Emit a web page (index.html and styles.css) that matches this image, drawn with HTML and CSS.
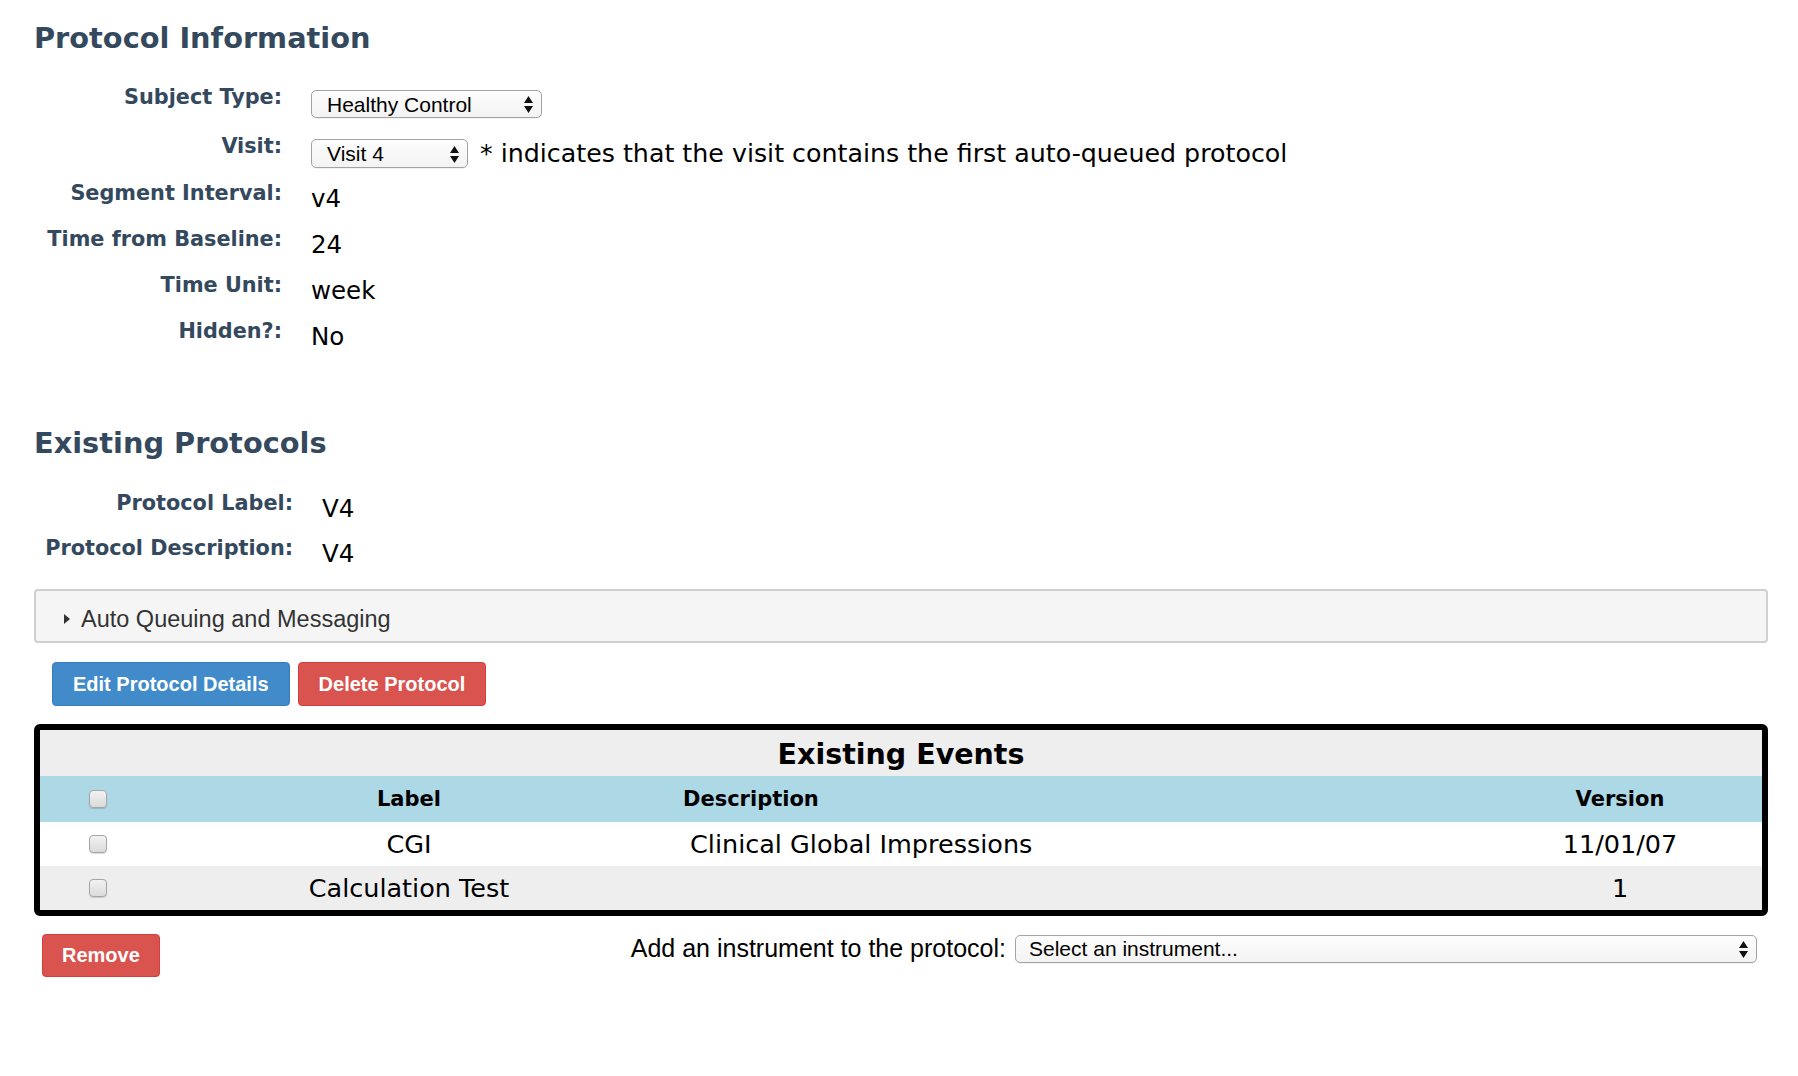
FILE: index.html
```html
<!DOCTYPE html>
<html lang="en">
<head>
    <meta charset="UTF-8">
    <meta name="viewport" content="width=device-width, initial-scale=1.0">
    <title>Protocol Information</title>
    <link rel="stylesheet" href="styles.css">
</head>
<body>
    <h1 class="section-title">Protocol Information</h1>

    <div class="info-grid">
        <div class="info-label">Subject Type:</div>
        <div class="info-control">
            <span class="select-wrap">
                <select class="select select-subject">
                    <option>Healthy Control</option>
                </select>
                <svg class="select-arrows" width="9" height="17" viewBox="0 0 9 17"><path d="M0 7 L4.5 0 L9 7 Z M0 10 L9 10 L4.5 17 Z"/></svg>
            </span>
        </div>

        <div class="info-label">Visit:</div>
        <div class="info-control">
            <span class="select-wrap">
                <select class="select select-visit">
                    <option>Visit 4</option>
                </select>
                <svg class="select-arrows" width="9" height="17" viewBox="0 0 9 17"><path d="M0 7 L4.5 0 L9 7 Z M0 10 L9 10 L4.5 17 Z"/></svg>
            </span>
            <span class="visit-note">* indicates that the visit contains the first auto-queued protocol</span>
        </div>

        <div class="info-label">Segment Interval:</div>
        <div class="info-value">v4</div>

        <div class="info-label">Time from Baseline:</div>
        <div class="info-value">24</div>

        <div class="info-label">Time Unit:</div>
        <div class="info-value">week</div>

        <div class="info-label">Hidden?:</div>
        <div class="info-value">No</div>
    </div>

    <h2 class="section-title protocols-title">Existing Protocols</h2>

    <div class="info-grid protocol-grid">
        <div class="info-label">Protocol Label:</div>
        <div class="info-value">V4</div>

        <div class="info-label">Protocol Description:</div>
        <div class="info-value">V4</div>
    </div>

    <div class="queue-panel">
        <span class="caret"></span>Auto Queuing and Messaging
    </div>

    <div class="protocol-buttons">
        <button type="button" class="btn btn-primary">Edit Protocol Details</button>
        <button type="button" class="btn btn-danger">Delete Protocol</button>
    </div>

    <div class="events-box">
        <table class="events-table">
            <caption>Existing Events</caption>
            <colgroup>
                <col class="col-check">
                <col class="col-label">
                <col class="col-desc">
                <col class="col-version">
            </colgroup>
            <thead>
                <tr>
                    <th class="cell-check"><input type="checkbox" class="check"></th>
                    <th>Label</th>
                    <th class="cell-desc">Description</th>
                    <th>Version</th>
                </tr>
            </thead>
            <tbody>
                <tr>
                    <td class="cell-check"><input type="checkbox" class="check"></td>
                    <td>CGI</td>
                    <td class="cell-desc">Clinical Global Impressions</td>
                    <td>11/01/07</td>
                </tr>
                <tr>
                    <td class="cell-check"><input type="checkbox" class="check"></td>
                    <td>Calculation Test</td>
                    <td class="cell-desc"></td>
                    <td>1</td>
                </tr>
            </tbody>
        </table>
    </div>

    <div class="table-actions">
        <button type="button" class="btn btn-danger btn-remove">Remove</button>
        <div class="add-instrument">
            <label for="instrument">Add an instrument to the protocol:</label>
            <span class="select-wrap">
                <select id="instrument" class="select select-instrument">
                    <option>Select an instrument...</option>
                </select>
                <svg class="select-arrows" width="9" height="17" viewBox="0 0 9 17"><path d="M0 7 L4.5 0 L9 7 Z M0 10 L9 10 L4.5 17 Z"/></svg>
            </span>
        </div>
    </div>
</body>
</html>
```

FILE: styles.css
```css
body {
    margin: 0;
    padding: 21px 30px 40px 34px;
    background-color: #fff;
    font-family: "DejaVu Sans", Verdana, sans-serif;
    color: #000;
}

.section-title {
    margin: 0;
    font-size: 28.8px;
    line-height: 34px;
    font-weight: bold;
    color: #34495e;
}

.protocols-title {
    margin-top: 62px;
}

/* label / value rows */
.info-grid {
    display: grid;
    grid-template-columns: 248px auto;
    grid-template-rows: 49px 47px repeat(4, 46px);
    column-gap: 29px;
    margin-top: 29px;
}

.protocol-grid {
    grid-template-columns: 259px auto;
    grid-template-rows: 45px 46px;
    margin-top: 30px;
}

.info-label {
    text-align: right;
    font-size: 20.8px;
    line-height: 26px;
    font-weight: bold;
    color: #34495e;
}

.info-value {
    padding-top: 4px;
    font-size: 24.5px;
    line-height: 30px;
}

.info-control {
    display: flex;
    align-items: center;
    align-self: start;
    padding-top: 6px;
}

.visit-note {
    margin-left: 12px;
    font-size: 25.3px;
    white-space: nowrap;
}

/* mac style selects */
.select-wrap {
    position: relative;
    display: inline-block;
}

.select {
    appearance: none;
    -webkit-appearance: none;
    display: block;
    height: 28px;
    padding: 0 26px 0 15px;
    border: 1px solid #a3a3a3;
    border-radius: 5px;
    background: linear-gradient(#fdfdfd, #f3f3f3);
    box-shadow: 0 1px 1px rgba(0, 0, 0, 0.06);
    font-family: "Liberation Sans", Arial, sans-serif;
    font-size: 21px;
    color: #000;
}

.select-subject {
    width: 231px;
}

.select-visit {
    width: 157px;
    height: 29px;
}

.select-instrument {
    width: 742px;
    padding-left: 13px;
}

.select-arrows {
    position: absolute;
    right: 9px;
    top: 50%;
    margin-top: -8px;
    fill: #111;
    pointer-events: none;
}

/* collapsible panel */
.queue-panel {
    box-sizing: border-box;
    height: 54px;
    margin-top: 8px;
    padding: 6px 0 0 28px;
    border: 2px solid #cfcfcf;
    border-radius: 4px;
    background-color: #f5f5f5;
    font-family: "Liberation Sans", Arial, sans-serif;
    font-size: 23.5px;
    line-height: 44px;
    color: #333;
}

.caret {
    display: inline-block;
    width: 0;
    height: 0;
    margin-right: 11px;
    vertical-align: 3px;
    border-left: 6px solid #333;
    border-top: 5.5px solid transparent;
    border-bottom: 5.5px solid transparent;
}

/* buttons */
.protocol-buttons {
    display: flex;
    gap: 8px;
    margin: 19px 0 0 18px;
}

.btn {
    height: 44px;
    padding: 0 20px;
    border: 1px solid;
    border-radius: 4px;
    font-family: "Liberation Sans", Arial, sans-serif;
    font-size: 20px;
    font-weight: bold;
    color: #fff;
    cursor: pointer;
}

.btn-primary {
    background-color: #428bca;
    border-color: #357ebd;
}

.btn-danger {
    background-color: #d9534f;
    border-color: #d43f3a;
}

.btn-remove {
    height: 43px;
    margin-left: 8px;
    padding: 0 19px;
}

/* events table */
.events-box {
    margin-top: 18px;
    border: 6px solid #000;
    border-radius: 6px;
    overflow: hidden;
}

.events-table {
    width: 100%;
    table-layout: fixed;
    border-collapse: collapse;
}

.events-table caption {
    padding-top: 3px;
    background-color: #eee;
    font-size: 28.5px;
    line-height: 43px;
    font-weight: bold;
}

.col-check {
    width: 116px;
}

.col-label {
    width: 506px;
}

.col-desc {
    width: 816px;
}

.col-version {
    width: 284px;
}

.events-table th,
.events-table td {
    padding: 0;
    text-align: center;
    white-space: nowrap;
}

.events-table th {
    height: 46px;
    background-color: #add8e6;
    font-size: 21px;
    font-weight: bold;
}

.events-table td {
    height: 44px;
    font-size: 25.5px;
    line-height: 44px;
}

.events-table tbody tr:nth-child(even) {
    background-color: #eee;
}

.events-table th.cell-desc {
    padding-left: 21px;
    text-align: left;
}

.events-table td.cell-desc {
    padding-left: 28px;
    text-align: left;
}

.check {
    appearance: none;
    -webkit-appearance: none;
    display: block;
    width: 18px;
    height: 18px;
    margin: 0 auto;
    border: 1px solid #a5a5a5;
    border-radius: 4px;
    background: linear-gradient(#f2f2f2, #dadada);
    box-shadow: 0 1px 1px rgba(0, 0, 0, 0.15);
}

/* under the table */
.table-actions {
    display: flex;
    justify-content: space-between;
    align-items: flex-start;
    margin-top: 18px;
    padding-right: 11px;
}

.add-instrument {
    display: flex;
    align-items: center;
    gap: 9px;
    font-family: "Liberation Sans", Arial, sans-serif;
    font-size: 25px;
}
```
